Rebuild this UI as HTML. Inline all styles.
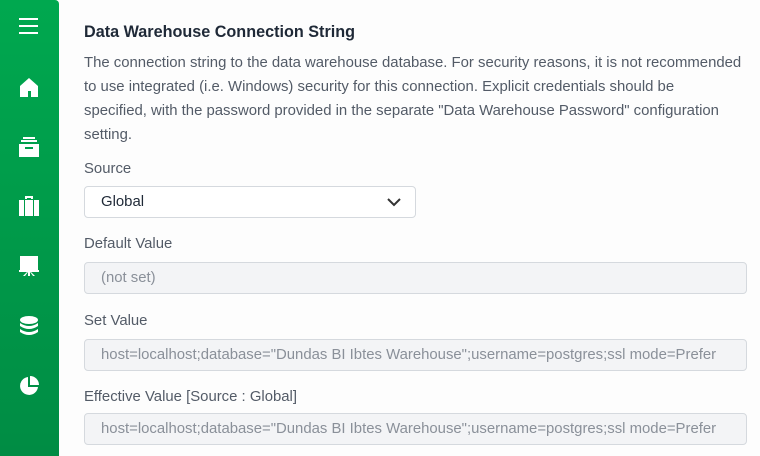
<!DOCTYPE html>
<html><head><style>
body{margin:0;width:760px;height:456px;overflow:hidden;background:#fdfdfd;font-family:"Liberation Sans",sans-serif;position:relative}
#sb{position:absolute;left:0;top:0;width:59px;height:456px;background:linear-gradient(#00a84f,#008c44);border-top-right-radius:4px}
#sb svg{position:absolute;left:18px;fill:#fff}
.t{position:absolute;left:84px;white-space:nowrap}
h1{position:absolute;left:84px;top:23px;margin:0;font-size:16.2px;font-weight:bold;color:#1f2937}
p{position:absolute;left:84px;top:51px;margin:0;width:680px;font-size:14.9px;line-height:24px;color:#535b67;white-space:nowrap}
.l{font-size:14.9px;color:#535b67}
.box{position:absolute;left:84px;width:663px;height:30px;border:1px solid #d5d9de;border-radius:4px;background:#f3f4f6;box-sizing:border-box;font-size:14.9px;color:#8a9099;line-height:29px;padding-left:16px;white-space:nowrap;overflow:hidden}
</style></head><body>
<div id="sb">
<svg style="top:17px" width="22" height="18" viewBox="0 0 22 18"><rect x="1" y="1" width="19" height="2"/><rect x="1" y="8" width="19" height="2"/><rect x="1" y="15" width="19" height="2"/></svg>
<svg style="top:76px" width="22" height="22" viewBox="0 0 22 22"><path d="M2 10L11 2L20 10V21H13V15H10V21H2Z"/></svg>
<svg style="top:136px" width="22" height="22" viewBox="0 0 22 22"><rect x="5" y="1" width="12" height="2"/><rect x="3" y="4" width="16" height="2"/><path d="M1 8H21V21H1ZM7 11V13H15V11Z" fill-rule="evenodd"/></svg>
<svg style="top:195px" width="22" height="22" viewBox="0 0 22 22"><path d="M7 1H15V4H13V3H9V4H7ZM1 5H21V21H1ZM6 5V21H7V5ZM15 5V21H16V5Z" fill-rule="evenodd"/></svg>
<svg style="top:255px" width="22" height="22" viewBox="0 0 22 22"><rect x="2" y="1" width="18" height="14"/><rect x="1" y="15" width="20" height="2"/><path d="M5 21L9 17H10L7 21ZM17 21L13 17H12L15 21ZM10 17H12V21H10Z"/></svg>
<svg style="top:315px" width="22" height="22" viewBox="0 0 22 22"><ellipse cx="11" cy="5" rx="9" ry="4"/><path d="M2 8Q11 14 20 8V11Q11 17 2 11ZM2 14Q11 20 20 14V17Q11 23 2 17Z"/></svg>
<svg style="top:375px" width="22" height="22" viewBox="0 0 22 22"><path d="M10 2A9 9 0 1 0 20 12H10Z"/><path d="M12 1A9 9 0 0 1 21 10H12Z"/></svg>
</div>
<h1>Data Warehouse Connection String</h1>
<p>The connection string to the data warehouse database. For security reasons, it is not recommended<br>to use integrated (i.e. Windows) security for this connection. Explicit credentials should be<br>specified, with the password provided in the separate "Data Warehouse Password" configuration<br>setting.</p>
<div class="t l" style="top:161px">Source</div>
<div class="box" style="top:186px;width:332px;height:32px;background:#fff;color:#1f2937;line-height:31px">Global
<svg style="position:absolute;left:302px;top:11px" width="14" height="9" viewBox="0 0 14 9"><path d="M1 1L7 7L13 1" stroke="#333" stroke-width="2" fill="none"/></svg></div>
<div class="t l" style="top:236px">Default Value</div>
<div class="box" style="top:262px;height:32px;line-height:31px">(not set)</div>
<div class="t l" style="top:313px">Set Value</div>
<div class="box" style="top:339px;height:32px;line-height:31px">host=localhost;database="Dundas BI Ibtes Warehouse";username=postgres;ssl mode=Prefer</div>
<div class="t l" style="top:389px">Effective Value [Source : Global]</div>
<div class="box" style="top:413px;height:32px;line-height:31px">host=localhost;database="Dundas BI Ibtes Warehouse";username=postgres;ssl mode=Prefer</div>
</body></html>
